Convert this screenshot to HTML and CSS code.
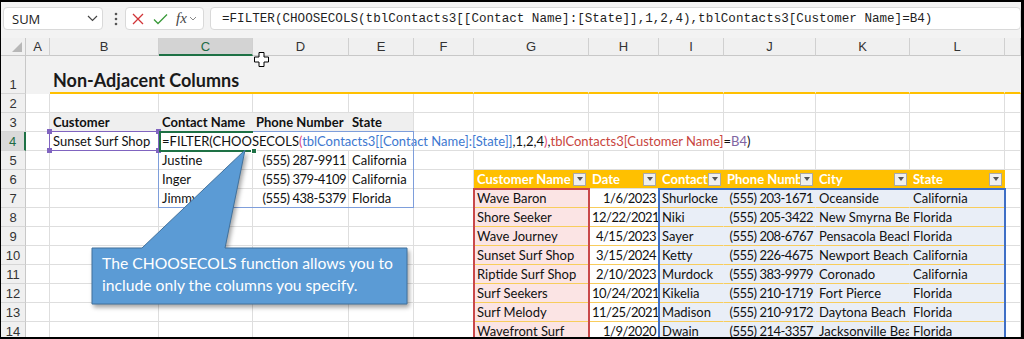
FILE: index.html
```html
<!DOCTYPE html>
<html lang="en">

<head>
    <meta charset="UTF-8">
    <title>Non-Adjacent Columns</title>

    <link rel="stylesheet" href="styles.css">

</head>

<body>

    <div class="frame">

        <div class="fbar">
            <div class="namebox">
                <span>SUM</span>
                <svg width="11" height="7" viewBox="0 0 11 7"><polyline points="1,1 5.5,5.5 10,1" fill="none" stroke="#444" stroke-width="1.2"/></svg>
            </div>
            <svg class="dots" width="4" height="14" viewBox="0 0 4 14"><circle cx="2" cy="2" r="1.3"/><circle cx="2" cy="7" r="1.3"/><circle cx="2" cy="12" r="1.3"/></svg>
            <div class="fxbox">
                <svg width="12" height="12" viewBox="0 0 12 12"><path d="M1,1 L11,11 M11,1 L1,11" stroke="#d13438" stroke-width="1.3"/></svg>
                <svg width="15" height="12" viewBox="0 0 15 12"><polyline points="1,6.5 5,10.5 14,1.5" fill="none" stroke="#3a9a3a" stroke-width="1.3"/></svg>
                <span class="fx">fx</span>
                <svg width="8" height="5" viewBox="0 0 8 5"><polyline points="1,1 4,4 7,1" fill="none" stroke="#888" stroke-width="1"/></svg>
            </div>
            <div class="finput">=FILTER(CHOOSECOLS(tblContacts3[[Contact Name]:[State]],1,2,4),tblContacts3[Customer Name]=B4)</div>
        </div>

        <div class="wrap">

            <div class="sheet">
                <!-- column headers -->
                <div class="corner"></div>
                <div class="ch">A</div>
                <div class="ch">B</div>
                <div class="ch sel">C</div>
                <div class="ch">D</div>
                <div class="ch">E</div>
                <div class="ch">F</div>
                <div class="ch">G</div>
                <div class="ch">H</div>
                <div class="ch">I</div>
                <div class="ch">J</div>
                <div class="ch">K</div>
                <div class="ch">L</div>
                <div class="ch"></div>

                <!-- row 1 -->
                <div class="rh">1</div>
                <div class="c r1a"></div>
                <div class="c r1 title">Non-Adjacent Columns</div>
                <div class="c r1"></div><div class="c r1"></div><div class="c r1"></div><div class="c r1"></div>
                <div class="c r1"></div><div class="c r1"></div><div class="c r1"></div>

                <!-- row 2 -->
                <div class="rh">2</div>
                <div class="c"></div><div class="c"></div><div class="c"></div><div class="c"></div><div class="c"></div>
                <div class="c"></div><div class="c"></div><div class="c"></div><div class="c"></div><div class="c"></div>
                <div class="c"></div><div class="c"></div><div class="c"></div>

                <!-- row 3 -->
                <div class="rh">3</div>
                <div class="c"></div>
                <div class="c lbl">Customer</div>
                <div class="c lbl">Contact Name</div>
                <div class="c lbl">Phone Number</div>
                <div class="c lbl last">State</div>
                <div class="c"></div><div class="c"></div><div class="c"></div><div class="c"></div>
                <div class="c"></div><div class="c"></div><div class="c"></div><div class="c"></div>

                <!-- row 4 -->
                <div class="rh sel">4</div>
                <div class="c"></div>
                <div class="c">Sunset Surf Shop</div>
                <div class="c formula">=FILTER(CHOOSECOLS<span class="pk">(</span><span class="bl">tblContacts3[[Contact Name]:[State]]</span>,1,2,4<span class="pk">)</span>,<span class="rd">tblContacts3[Customer Name]</span>=<span class="pu">B4</span>)</div>
                <div class="c"></div><div class="c"></div><div class="c"></div>

                <!-- row 5 -->
                <div class="rh">5</div>
                <div class="c"></div><div class="c"></div>
                <div class="c">Justine</div>
                <div class="c num">(555) 287-9911</div>
                <div class="c">California</div>
                <div class="c"></div>
                <div class="c"></div><div class="c"></div><div class="c"></div><div class="c"></div>
                <div class="c"></div><div class="c"></div><div class="c"></div>

                <!-- row 6 -->
                <div class="rh">6</div>
                <div class="c"></div><div class="c"></div>
                <div class="c">Inger</div>
                <div class="c num">(555) 379-4109</div>
                <div class="c">California</div>
                <div class="c"></div>
                <div class="c th"><span>Customer Name</span><b class="dd"></b></div>
                <div class="c th"><span>Date</span><b class="dd"></b></div>
                <div class="c th"><span>Contact</span><b class="dd"></b></div>
                <div class="c th"><span>Phone Number</span><b class="dd"></b></div>
                <div class="c th"><span>City</span><b class="dd"></b></div>
                <div class="c th"><span>State</span><b class="dd"></b></div>
                <div class="c"></div>

                <!-- row 7 -->
                <div class="rh">7</div>
                <div class="c"></div><div class="c"></div>
                <div class="c">Jimmy</div>
                <div class="c num">(555) 438-5379</div>
                <div class="c">Florida</div>
                <div class="c"></div>
                <div class="c td pink">Wave Baron</div>
                <div class="c td num">1/6/2023</div>
                <div class="c td sky">Shurlocke</div>
                <div class="c td sky num">(555) 203-1671</div>
                <div class="c td sky">Oceanside</div>
                <div class="c td sky">California</div>
                <div class="c"></div>

                <!-- row 8 -->
                <div class="rh">8</div>
                <div class="c"></div><div class="c"></div><div class="c"></div><div class="c"></div><div class="c"></div><div class="c"></div>
                <div class="c td pink">Shore Seeker</div>
                <div class="c td num">12/22/2021</div>
                <div class="c td sky">Niki</div>
                <div class="c td sky num">(555) 205-3422</div>
                <div class="c td sky">New Smyrna Beach</div>
                <div class="c td sky">Florida</div>
                <div class="c"></div>

                <!-- row 9 -->
                <div class="rh">9</div>
                <div class="c"></div><div class="c"></div><div class="c"></div><div class="c"></div><div class="c"></div><div class="c"></div>
                <div class="c td pink">Wave Journey</div>
                <div class="c td num">4/15/2023</div>
                <div class="c td sky">Sayer</div>
                <div class="c td sky num">(555) 208-6767</div>
                <div class="c td sky">Pensacola Beach</div>
                <div class="c td sky">Florida</div>
                <div class="c"></div>

                <!-- row 10 -->
                <div class="rh">10</div>
                <div class="c"></div><div class="c"></div><div class="c"></div><div class="c"></div><div class="c"></div><div class="c"></div>
                <div class="c td pink">Sunset Surf Shop</div>
                <div class="c td num">3/15/2024</div>
                <div class="c td sky">Ketty</div>
                <div class="c td sky num">(555) 226-4675</div>
                <div class="c td sky">Newport Beach</div>
                <div class="c td sky">California</div>
                <div class="c"></div>

                <!-- row 11 -->
                <div class="rh">11</div>
                <div class="c"></div><div class="c"></div><div class="c"></div><div class="c"></div><div class="c"></div><div class="c"></div>
                <div class="c td pink">Riptide Surf Shop</div>
                <div class="c td num">2/10/2023</div>
                <div class="c td sky">Murdock</div>
                <div class="c td sky num">(555) 383-9979</div>
                <div class="c td sky">Coronado</div>
                <div class="c td sky">California</div>
                <div class="c"></div>

                <!-- row 12 -->
                <div class="rh">12</div>
                <div class="c"></div><div class="c"></div><div class="c"></div><div class="c"></div><div class="c"></div><div class="c"></div>
                <div class="c td pink">Surf Seekers</div>
                <div class="c td num">10/24/2021</div>
                <div class="c td sky">Kikelia</div>
                <div class="c td sky num">(555) 210-1719</div>
                <div class="c td sky">Fort Pierce</div>
                <div class="c td sky">Florida</div>
                <div class="c"></div>

                <!-- row 13 -->
                <div class="rh">13</div>
                <div class="c"></div><div class="c"></div><div class="c"></div><div class="c"></div><div class="c"></div><div class="c"></div>
                <div class="c td pink">Surf Melody</div>
                <div class="c td num">11/25/2021</div>
                <div class="c td sky">Madison</div>
                <div class="c td sky num">(555) 210-9172</div>
                <div class="c td sky">Daytona Beach</div>
                <div class="c td sky">Florida</div>
                <div class="c"></div>

                <!-- row 14 -->
                <div class="rh">14</div>
                <div class="c"></div><div class="c"></div><div class="c"></div><div class="c"></div><div class="c"></div><div class="c"></div>
                <div class="c td pink">Wavefront Surf</div>
                <div class="c td num">1/9/2020</div>
                <div class="c td sky">Dwain</div>
                <div class="c td sky num">(555) 214-3357</div>
                <div class="c td sky">Jacksonville Beach</div>
                <div class="c td sky">Florida</div>
                <div class="c"></div>
            </div>

            <!-- range highlights drawn over the grid -->
            <div class="marks">
                <div class="spill"></div>
                <div class="red"></div>
                <div class="blue"></div>
                <div class="pick"><i class="k1"></i><i class="k2"></i><i class="k3"></i><i class="k4"></i></div>
                <div class="active"><i class="handle"></i></div>
            </div>

            <div class="callout">
                <svg width="1020" height="301" viewBox="1 38 1020 301">
                    <path d="M92,248 L142,248 L245,150 L225,248 L407,248 L407,304 L92,304 Z" fill="#5b9bd5" stroke="#41719c" stroke-width="1"/>
                </svg>
                <p>The CHOOSECOLS function allows you to<br>include only the columns you specify.</p>
            </div>

            <svg class="cursor" width="15" height="15" viewBox="0 0 15 15">
                <path d="M5,0.5 H10 V5 H14.5 V10 H10 V14.5 H5 V10 H0.5 V5 H5 Z" fill="#fff" stroke="#000" stroke-width="1"/>
            </svg>

        </div>
    </div>

</body>

</html>
```

FILE: styles.css
```css
* {
    box-sizing: border-box;
}

body {
    margin: 0;
    background: #000;
}

.frame {
    width: 1024px;
    height: 339px;
    border-style: solid;
    border-color: #000;
    border-width: 2px 3px 2px 1px;
    background: #fff;
    overflow: hidden;
    font-family: Lato, "Liberation Sans", sans-serif;
}

/* formula bar */

.fbar {
    height: 36px;
    background: #f3f3f3;
    display: flex;
    align-items: flex-start;
    padding: 5px 0 0 2px;
}

.namebox,
.fxbox,
.finput {
    height: 23px;
    background: #fff;
    border: 1px solid #d9d9d9;
    border-radius: 4px;
    display: flex;
    align-items: center;
}

.namebox {
    width: 100px;
    justify-content: space-between;
    padding: 0 4px 0 8px;
    font: 13px "Open Sans", sans-serif;
    color: #222;
}

.dots {
    fill: #555;
    margin: 5px 0 0 11px;
}

.fxbox {
    width: 79px;
    margin-left: 7px;
    padding-left: 6px;
    gap: 9px;
}

.fx {
    font: italic 15px "Liberation Serif", serif;
    color: #444;
    margin-left: -1px;
}

.fxbox svg:last-child {
    margin-left: -7px;
}

.finput {
    flex: 1;
    margin-left: 6px;
    padding-left: 11px;
    font: 12.6px "Liberation Mono", monospace;
    color: #1f1f1f;
    white-space: nowrap;
}

/* sheet */

.wrap {
    position: relative;
    height: 301px;
}

.sheet,
.marks {
    display: grid;
    grid-template-columns: 25px 24px 109px 94px 96px 65px 60px 115px 70px 65px 92px 94px 95px 16px;
    grid-template-rows: 18px 38px repeat(13, 19px);
}

.corner {
    background: #f0f0f0;
    border-right: 1px solid #c8c8c8;
    border-bottom: 1px solid #c8c8c8;
    position: relative;
}

.corner::after {
    content: "";
    position: absolute;
    right: 3px;
    bottom: 3px;
    border-left: 10px solid transparent;
    border-bottom: 10px solid #b7b7b7;
}

.ch {
    background: #f0f0f0;
    border-right: 1px solid #d0d0d0;
    border-bottom: 1px solid #c8c8c8;
    text-align: center;
    font: 13px/17px "Liberation Sans", sans-serif;
    color: #333;
}

.ch.sel {
    background: #d3d3d3;
    color: #1d6b45;
    border-bottom: 2px solid #1e7145;
}

.rh {
    background: #f0f0f0;
    border-right: 1px solid #c8c8c8;
    border-bottom: 1px solid #d6d6d6;
    text-align: center;
    font: 13px "Liberation Sans", sans-serif;
    color: #333;
    display: flex;
    align-items: flex-end;
    justify-content: center;
    padding-bottom: 1px;
}

.rh.sel {
    background: #dadada;
    color: #1d6b45;
    border-right: 2px solid #1e7145;
}

.c {
    border-right: 1px solid #dedede;
    border-bottom: 1px solid #dedede;
    padding: 0 3px;
    font-size: 13px;
    line-height: 18px;
    color: #111;
    white-space: nowrap;
    overflow: hidden;
}

.num {
    text-align: right;
    padding-right: 2px;
    letter-spacing: -0.5px;
}

.r1a {
    background: #f2f2f2;
    border-right-color: #f2f2f2;
    border-bottom-color: #f2f2f2;
}

.r1 {
    background: #f2f2f2;
    border-right-color: #f2f2f2;
    border-bottom: 2px solid #ffc000;
}

.title {
    grid-column: span 5;
    font-size: 18px;
    font-weight: bold;
    line-height: 22px;
    padding-top: 13px;
    color: #1a1a1a;
}

.lbl {
    background: #efefef;
    border-right-color: #efefef;
    font-weight: bold;
}

.lbl.last {
    border-right-color: #dedede;
}

.formula {
    grid-column: span 8;
    overflow: visible;
}

.pk {
    color: #e0457b;
}

.bl {
    color: #3d78d0;
}

.rd {
    color: #c8453d;
}

.pu {
    color: #8064a2;
}

/* table */

.th {
    background: #ffc000;
    border-right-color: #ffc000;
    color: #fff;
    font-weight: bold;
    display: flex;
    align-items: center;
    padding-right: 2px;
}

.th span {
    flex: 1;
    min-width: 0;
    overflow: hidden;
}

.dd {
    flex: none;
    width: 13px;
    height: 13px;
    background: #efefef;
    border: 1px solid #a8a8a8;
    display: flex;
    align-items: center;
    justify-content: center;
}

.dd::after {
    content: "";
    border-left: 3.5px solid transparent;
    border-right: 3.5px solid transparent;
    border-top: 4px solid #555;
}

.td {
    border-right-color: #fff;
    border-bottom-color: #f8cd5c;
}

.pink {
    background: #fbe4e4;
    border-right-color: #fbe4e4;
}

.sky {
    background: #e9eef7;
    border-right-color: #e9eef7;
}

/* highlights */

.marks {
    position: absolute;
    top: 0;
    left: 0;
    pointer-events: none;
}

.spill {
    grid-column: 4 / 7;
    grid-row: 5 / 9;
    border: 1px solid #7e9edb;
    margin: -1px 0 0 -1px;
}

.red {
    grid-column: 8;
    grid-row: 8 / 16;
    border: 2px solid #c9484a;
    border-bottom: none;
    margin: -1px -1px 0 -1px;
}

.blue {
    grid-column: 10 / 14;
    grid-row: 8 / 16;
    border: 2px solid #3f6fc6;
    border-bottom: none;
    margin: -1px -1px 0 -1px;
}

.pick {
    grid-column: 3;
    grid-row: 5;
    border: 1px solid #8064c0;
    margin: -1px 0 0 -1px;
    position: relative;
}

.pick i {
    position: absolute;
    width: 5px;
    height: 5px;
    background: #8064c0;
}

.k1 { left: -3px; top: -3px; }
.k2 { right: -3px; top: -3px; }
.k3 { left: -3px; bottom: -3px; }
.k4 { right: -3px; bottom: -3px; }

.active {
    grid-column: 4;
    grid-row: 5;
    border: 2px solid #1e7145;
    border-right: none;
    margin: -1px 0 -1px 0;
    position: relative;
}

.handle {
    position: absolute;
    right: -4px;
    bottom: -4px;
    width: 6px;
    height: 6px;
    background: #1e7145;
    border: 1px solid #fff;
}

/* callout */

.callout {
    position: absolute;
    top: 0;
    left: 0;
}

.callout svg {
    display: block;
    filter: drop-shadow(2px 3px 2px rgba(0, 0, 0, 0.35));
}

.callout p {
    position: absolute;
    left: 101px;
    top: 214px;
    margin: 0;
    font-size: 15.7px;
    line-height: 22px;
    color: #fff;
    white-space: nowrap;
}

.cursor {
    position: absolute;
    left: 253px;
    top: 14px;
}
```
